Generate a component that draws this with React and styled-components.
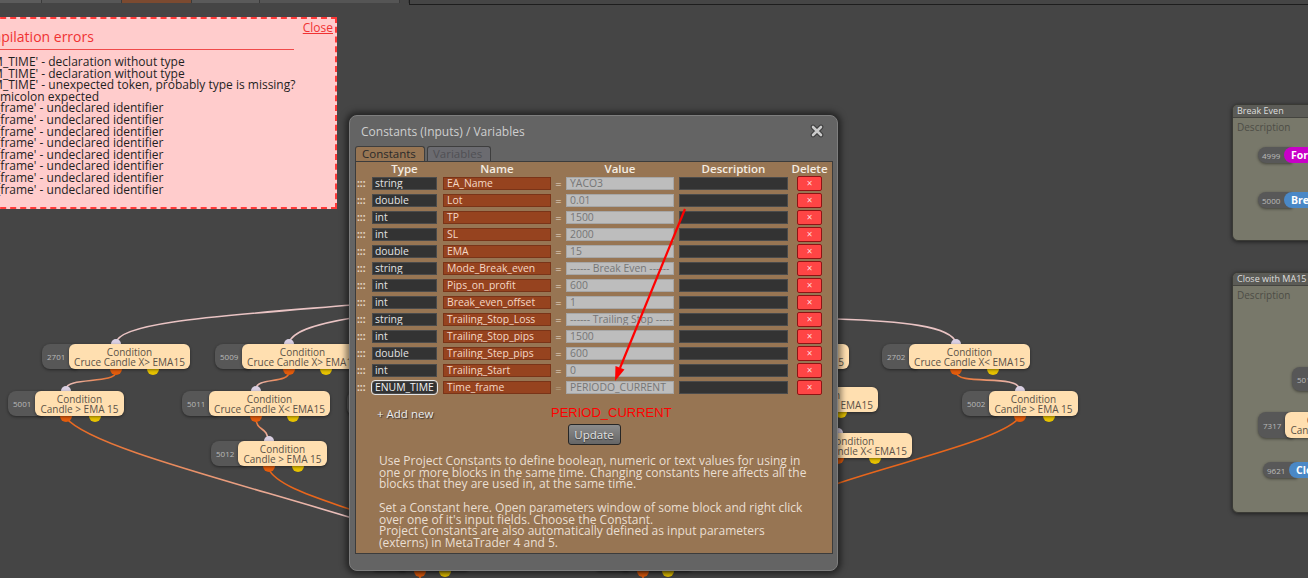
import React from 'react';
import styled, { createGlobalStyle } from 'styled-components';

const GlobalStyle = createGlobalStyle`
  html, body {
    margin: 0;
    padding: 0;
    background: #454545;
    overflow: hidden;
  }
  body {
    font-family: "Open Sans", "Noto Sans", sans-serif;
  }
`;

const Page = styled.div`
  position: relative;
  width: 1308px;
  height: 578px;
  overflow: hidden;
  background: #454545;
`;

/* thin strip of the docked toolbar that sticks in from the top */
const TopStrip = styled.div`
  display: flex;
  align-items: flex-start;
  height: 5px;
`;

const StripSeg = styled.div`
  width: ${p => p.$w}px;
  height: 3px;
  background: ${p => p.$c};
  border-right: 1px solid #3b3b3b;
  box-sizing: border-box;
`;

const DockEdge = styled.div`
  flex: 1;
  height: 5px;
  border-left: 1px solid #1d1d1d;
  border-bottom: 1px solid #1d1d1d;
  box-sizing: border-box;
`;

/* ---------- canvas: wires, nodes, groups ---------- */
const WireLayer = styled.svg`
  position: absolute;
  left: 0;
  top: 0;
  z-index: 1;
`;

const NodeWrap = styled.div`
  position: absolute;
  left: ${p => p.$x}px;
  top: ${p => p.$y}px;
  width: ${p => p.$w}px;
  height: ${p => p.$h || 25}px;
  display: flex;
  z-index: 2;
`;

const NodeId = styled.div`
  flex: 0 0 35px;
  margin-right: -8px;
  padding-left: 5px;
  box-sizing: border-box;
  background: #575757;
  border-radius: 8px 0 0 8px;
  color: #b9b9b9;
  font-size: 8px;
  display: flex;
  align-items: center;
  box-shadow: 0 1px 3px rgba(0, 0, 0, 0.45);
`;

const NodeBody = styled.div`
  position: relative;
  flex: 1;
  min-width: 0;
  background: #ffdfb0;
  border-radius: 6px;
  box-shadow: 0 1px 3px rgba(0, 0, 0, 0.45);
  color: #5c5247;
  font-size: 10px;
  line-height: 10px;
  text-align: center;
  display: flex;
  flex-direction: column;
  justify-content: center;
  white-space: nowrap;
  overflow: hidden;
`;

const Port = styled.span`
  position: absolute;
  z-index: -1;
  left: calc(${p => p.$at}% - ${p => p.$d / 2}px);
  width: ${p => p.$d}px;
  height: ${p => p.$d}px;
  border-radius: 50%;
  background: ${p => p.$c};
  ${p => (p.$top ? `top: -${p.$d / 2}px;` : `bottom: -${p.$d / 2}px;`)}
`;

function Node({ x, y, w, h, id, a = 'Condition', b }) {
  return (
    <NodeWrap $x={x} $y={y} $w={w} $h={h}>
      <Port $top $at={50} $d={10} $c="#d9cfe2" />
      <Port $at={50} $d={12} $c="#e35c0c" />
      <Port $at={75} $d={12} $c="#e6c200" />
      <NodeId>{id}</NodeId>
      <NodeBody>
        <span>{a}</span>
        <span>{b}</span>
      </NodeBody>
    </NodeWrap>
  );
}

const Group = styled.div`
  position: absolute;
  left: ${p => p.$x}px;
  top: ${p => p.$y}px;
  width: 220px;
  height: ${p => p.$h}px;
  box-sizing: border-box;
  background: #78786a;
  border: 1px solid #3a3a35;
  border-radius: 6px;
  box-shadow: 0 1px 4px rgba(0, 0, 0, 0.55);
  z-index: 2;
`;

const GroupTitle = styled.div`
  height: 12px;
  line-height: 12px;
  padding-left: 4px;
  background: #5b5b56;
  color: #dedede;
  font-size: 9px;
  border-radius: 5px 5px 0 0;
  border-bottom: 1px solid #44443f;
`;

const GroupDesc = styled.div`
  padding: 2px 0 0 4px;
  font-size: 10px;
  line-height: 14px;
  color: #4d4d46;
`;

const Pill = styled.div`
  position: absolute;
  left: ${p => p.$x}px;
  top: ${p => p.$y}px;
  height: 16px;
  display: flex;
`;

const PillId = styled.div`
  flex: 0 0 34px;
  margin-right: -8px;
  padding-left: 4px;
  box-sizing: border-box;
  background: #585858;
  border-radius: 8px 0 0 8px;
  color: #bcbcbc;
  font-size: 8px;
  display: flex;
  align-items: center;
  box-shadow: 0 1px 3px rgba(0, 0, 0, 0.45);
`;

const PillLabel = styled.div`
  position: relative;
  background: ${p => p.$c};
  color: #fff;
  font-size: 10.5px;
  font-weight: 700;
  line-height: 16px;
  padding: 0 7px;
  border-radius: 8px;
  white-space: nowrap;
`;

/* ---------- compilation errors popup ---------- */
const ErrorPanel = styled.div`
  position: absolute;
  left: -60px;
  top: 17px;
  width: 397px;
  height: 192px;
  box-sizing: border-box;
  background: #ffcccc;
  border: 2px dashed #ff3838;
  padding: 1px 2px 0 23px;
  z-index: 5;
`;

const ErrorHead = styled.div`
  display: flex;
  justify-content: space-between;
  align-items: flex-start;
`;

const ErrorTitle = styled.div`
  width: 329px;
  margin-top: 6.5px;
  padding: 0 0 3px 6px;
  box-sizing: border-box;
  border-bottom: 1px solid #f04a4a;
  color: #f03232;
  font-size: 14px;
  line-height: 19px;
`;

const CloseLink = styled.a`
  color: #f03232;
  font-size: 12px;
  line-height: 16px;
  text-decoration: underline;
`;

const ErrorList = styled.div`
  margin-top: 6.5px;
  color: #1f1f1f;
  font-size: 12px;
  line-height: 11.6px;
  white-space: nowrap;
`;

const ErrorLine = styled.div`
  margin-left: ${p => p.$shift || 0}px;
`;

/* ---------- constants dialog ---------- */
const Dialog = styled.div`
  position: absolute;
  left: 349px;
  top: 115px;
  width: 489px;
  height: 456px;
  box-sizing: border-box;
  background: #646464;
  border: 1px solid #7e7e7e;
  border-radius: 8px;
  box-shadow: 0 0 6px 3px rgba(0, 0, 0, 0.5);
  padding: 0 4px 0 5px;
  display: flex;
  flex-direction: column;
  z-index: 5;
`;

const TitleBar = styled.div`
  height: 30px;
  display: flex;
  align-items: center;
  justify-content: space-between;
  padding: 0 9px 0 6px;
  color: #cfcfcf;
  font-size: 12px;
`;

const Tabs = styled.div`
  height: 15px;
  display: flex;
  gap: 2px;
`;

const Tab = styled.div`
  width: ${p => p.$w}px;
  height: 15px;
  box-sizing: border-box;
  padding-left: ${p => (p.$active ? 6 : 5)}px;
  border: 1px solid #3e3e3e;
  border-bottom: none;
  border-radius: 3px 3px 0 0;
  background: ${p => (p.$active ? '#977553' : '#6b6b70')};
  color: ${p => (p.$active ? '#2a2a2a' : '#505054')};
  font-size: 11.5px;
  line-height: 14px;
`;

const Sheet = styled.div`
  height: 393px;
  box-sizing: border-box;
  background: #977553;
  border: 1px solid #3c3c3c;
  display: flex;
  flex-direction: column;
`;

const Row = styled.div`
  display: flex;
  align-items: center;
  height: ${p => p.$h || 17}px;
  padding-left: 1px;
`;

const Handle = styled.div`
  width: 10px;
  margin-right: 5px;
  color: #e6d9c8;
  font-size: 10px;
  font-weight: 700;
  line-height: 11px;
  white-space: nowrap;
  overflow: hidden;
`;

const Head = styled.div`
  width: ${p => p.$w}px;
  margin-left: ${p => p.$ml || 0}px;
  margin-right: ${p => p.$mr || 0}px;
  display: flex;
  justify-content: center;
  color: #f5ede2;
  font-size: 11.5px;
  font-weight: 600;
  line-height: 13px;
  white-space: nowrap;
`;

const Field = styled.div`
  width: ${p => p.$w}px;
  height: 13px;
  box-sizing: border-box;
  margin-left: ${p => p.$ml || 0}px;
  margin-right: ${p => p.$mr || 0}px;
  padding-left: ${p => p.$pl || 3}px;
  background: ${p => p.$bg};
  color: ${p => p.$fg};
  border: 1px solid ${p => p.$bd};
  font-size: 10.4px;
  line-height: 11px;
  white-space: nowrap;
  overflow: hidden;
  ${p => p.$focus && 'outline: 1px solid #e4e4e4; border-radius: 3px; color: #f4f4f4;'}
`;

const Eq = styled.div`
  width: 15px;
  text-align: center;
  color: ${p => (p.$dim ? '#bba58a' : '#e8dccc')};
  font-size: 11px;
  line-height: 13px;
`;

const DeleteBtn = styled.div`
  width: 25px;
  height: 15px;
  box-sizing: border-box;
  background: #ff4545;
  border: 1px solid #8e1414;
  border-radius: 2px;
  color: #ffdada;
  font-size: 10px;
  line-height: 12px;
  text-align: center;
`;

const AddRow = styled.div`
  display: grid;
  grid-template-columns: 195px 1fr;
  align-items: center;
  height: 18px;
  margin-top: 8px;
`;

const AddNew = styled.div`
  padding-left: 21px;
  color: #ededed;
  font-size: 11.5px;
  text-shadow: 1px 1px 1px #333;
`;

const Annotation = styled.div`
  color: #ff0000;
  font-family: "Liberation Sans", Arial, sans-serif;
  font-size: 13px;
  line-height: 16px;
`;

const UpdateButton = styled.div`
  align-self: center;
  width: 53px;
  height: 21px;
  margin-top: 2px;
  box-sizing: border-box;
  border: 1px solid #262626;
  border-radius: 3px;
  background: linear-gradient(#8c8c8c, #666);
  color: #e4e4e4;
  font-size: 11.5px;
  line-height: 19px;
  text-align: center;
  text-shadow: 0 1px 1px #333;
`;

const Help = styled.div`
  margin-top: 10px;
  padding-left: 23px;
  color: #eadfd2;
  font-size: 12px;
  line-height: 11.7px;
  white-space: nowrap;
`;

const ArrowLayer = styled.svg`
  position: absolute;
  left: 0;
  top: 0;
  z-index: 6;
  pointer-events: none;
`;

const errors = [
  ["'ENUM_TIME' - declaration without type", 0],
  ["'ENUM_TIME' - declaration without type", 0],
  ["'ENUM_TIME' - unexpected token, probably type is missing?", 0],
  ["';' - semicolon expected", 4],
  ...Array.from({ length: 8 }, () => ["'Time_frame' - undeclared identifier", 0]),
];

const constants = [
  ['string', 'EA_Name', 'YACO3'],
  ['double', 'Lot', '0.01'],
  ['int', 'TP', '1500'],
  ['int', 'SL', '2000'],
  ['double', 'EMA', '15'],
  ['string', 'Mode_Break_even', '------ Break Even ------'],
  ['int', 'Pips_on_profit', '600'],
  ['int', 'Break_even_offset', '1'],
  ['string', 'Trailing_Stop_Loss', '------ Trailing Stop ------'],
  ['int', 'Trailing_Stop_pips', '1500'],
  ['double', 'Trailing_Step_pips', '600'],
  ['int', 'Trailing_Start', '0'],
  ['ENUM_TIME', 'Time_frame', 'PERIODO_CURRENT'],
];

const nodes = [
  { id: '2701', x: 42, y: 344, w: 148, b: 'Cruce Candle X> EMA15' },
  { id: '5001', x: 8, y: 391, w: 116, b: 'Candle > EMA 15' },
  { id: '5009', x: 215, y: 344, w: 148, b: 'Cruce Candle X> EMA15' },
  { id: '5011', x: 182, y: 391, w: 148, b: 'Cruce Candle X< EMA15' },
  { id: '5012', x: 211, y: 441, w: 116, b: 'Candle > EMA 15' },
  { id: '5013', x: 347, y: 391, w: 148, b: 'Cruce Candle X< EMA15' },
  { id: '5005', x: 701, y: 344, w: 148, b: 'Cruce Candle X< EMA15' },
  { id: '5006', x: 730, y: 387, w: 148, b: 'Cruce Candle X> EMA15' },
  { id: '5014', x: 764, y: 433, w: 148, b: 'Cruce Candle X< EMA15' },
  { id: '2702', x: 882, y: 344, w: 148, b: 'Cruce Candle X< EMA15' },
  { id: '5002', x: 962, y: 391, w: 116, b: 'Candle > EMA 15' },
  { id: '5003', x: 370, y: 546, w: 100, b: 'Buy now' },
  { id: '5004', x: 593, y: 546, w: 100, b: 'Sell now' },
];

const PINK = '#eac4c4';
const ORANGE = '#e8661c';

const wires = [
  { d: 'M116 343 C 118 322, 220 316, 352 305', c: PINK },
  { d: 'M289 343 C 292 330, 322 323, 352 318', c: PINK },
  { d: 'M836 319 C 900 321, 952 326, 956 343', c: PINK },
  { d: 'M116 372 C 116 384, 66 377, 66 389', g: [116, 372, 66, 389] },
  { d: 'M289 372 C 289 384, 256 377, 256 389', g: [289, 372, 256, 389] },
  { d: 'M256 418 C 256 432, 268 426, 268 441', g: [256, 418, 268, 441] },
  { d: 'M956 372 C 956 386, 1019 374, 1019 389', g: [956, 372, 1019, 389] },
  { d: 'M66 418 C 90 446, 220 478, 352 518', g: [66, 418, 352, 518] },
  { d: 'M268 468 C 276 486, 318 498, 352 510', c: ORANGE },
  { d: 'M1019 418 C 1000 440, 900 462, 836 484', c: ORANGE },
  { d: 'M420 572 L 420 578', c: ORANGE },
  { d: 'M643 572 L 643 578', c: ORANGE },
];

export default function App() {
  return (
    <Page>
      <GlobalStyle />

      <TopStrip>
        <StripSeg $w={42} $c="#5c5c5c" />
        <StripSeg $w={80} $c="#575757" />
        <StripSeg $w={70} $c="#7b4a30" />
        <StripSeg $w={68} $c="#5a5a5a" />
        <StripSeg $w={140} $c="#555" />
        <StripSeg $w={9} $c="transparent" />
        <DockEdge />
      </TopStrip>

      <WireLayer width="1308" height="578">
        <defs>
          {wires.map((w, i) =>
            w.g ? (
              <linearGradient
                key={i}
                id={`wire${i}`}
                gradientUnits="userSpaceOnUse"
                x1={w.g[0]}
                y1={w.g[1]}
                x2={w.g[2]}
                y2={w.g[3]}
              >
                <stop offset="0" stopColor={ORANGE} />
                <stop offset="1" stopColor={PINK} />
              </linearGradient>
            ) : null
          )}
        </defs>
        {wires.map((w, i) => (
          <path
            key={i}
            d={w.d}
            fill="none"
            stroke={w.g ? `url(#wire${i})` : w.c}
            strokeWidth="1.6"
          />
        ))}
      </WireLayer>

      {nodes.map(n => (
        <Node key={n.id} {...n} />
      ))}

      <Group $x={1232} $y={104} $h={137}>
        <GroupTitle>Break Even</GroupTitle>
        <GroupDesc>Description</GroupDesc>
        <Pill $x={25} $y={42}>
          <PillId>4999</PillId>
          <PillLabel $c="#c800c8">For each Trade</PillLabel>
        </Pill>
        <Pill $x={25} $y={87}>
          <PillId>5000</PillId>
          <PillLabel $c="#4a88c6">Break even point</PillLabel>
        </Pill>
      </Group>

      <Group $x={1232} $y={272} $h={241}>
        <GroupTitle>Close with MA15</GroupTitle>
        <GroupDesc>Description</GroupDesc>
        <Node x={59} y={94} w={148} h={24} id="5010" b="Candle < EMA 15" />
        <Node x={25} y={139} w={116} h={26} id="7317" b="Candle < EMA 15" />
        <Pill $x={30} $y={189}>
          <PillId>9621</PillId>
          <PillLabel $c="#4a88c6">Close trades</PillLabel>
        </Pill>
      </Group>

      <ErrorPanel>
        <ErrorHead>
          <ErrorTitle>Compilation errors</ErrorTitle>
          <CloseLink>Close</CloseLink>
        </ErrorHead>
        <ErrorList>
          {errors.map(([text, shift], i) => (
            <ErrorLine key={i} $shift={shift}>
              {text}
            </ErrorLine>
          ))}
        </ErrorList>
      </ErrorPanel>

      <Dialog>
        <TitleBar>
          <span>Constants (Inputs) / Variables</span>
          <svg width="14" height="14" viewBox="0 0 14 14">
            <path d="M3 3 L11 11 M11 3 L3 11" stroke="#3b3b3b" strokeWidth="4.6" strokeLinecap="round" />
            <path d="M3 3 L11 11 M11 3 L3 11" stroke="#cacaca" strokeWidth="2.6" strokeLinecap="round" />
          </svg>
        </TitleBar>
        <Tabs>
          <Tab $w={70} $active>Constants</Tab>
          <Tab $w={64}>Variables</Tab>
        </Tabs>
        <Sheet>
          <Row $h={13}>
            <Head $w={10} $mr={5} />
            <Head $w={65} $mr={6}><span>Type</span></Head>
            <Head $w={108}><span>Name</span></Head>
            <Head $w={15} />
            <Head $w={108}><span>Value</span></Head>
            <Head $w={109} $ml={5} $mr={9}><span>Description</span></Head>
            <Head $w={25}><span>Delete</span></Head>
          </Row>
          {constants.map(([type, name, value]) => {
            const focus = type === 'ENUM_TIME';
            return (
              <Row key={name}>
                <Handle>:::</Handle>
                <Field $w={65} $mr={6} $pl={2} $bg="#333" $fg="#e2e2e2" $bd="#4b4b4b" $focus={focus}>
                  {type}
                </Field>
                <Field $w={108} $bg="#96431f" $fg="#f4d8c6" $bd="#7a3418">
                  {name}
                </Field>
                <Eq $dim={focus}>=</Eq>
                <Field $w={108} $bg="#bdbdbd" $fg="#767676" $bd="#a6a6a6">
                  {value}
                </Field>
                <Field $w={109} $ml={5} $mr={9} $bg="#333" $fg="#ddd" $bd="#4b4b4b" />
                <DeleteBtn>×</DeleteBtn>
              </Row>
            );
          })}
          <AddRow>
            <AddNew>+ Add new</AddNew>
            <Annotation>PERIOD_CURRENT</Annotation>
          </AddRow>
          <UpdateButton>Update</UpdateButton>
          <Help>
            Use Project Constants to define boolean, numeric or text values for using in
            <br />
            one or more blocks in the same time. Changing constants here affects all the
            <br />
            blocks that they are used in, at the same time.
            <br />
            <br />
            Set a Constant here. Open parameters window of some block and right click
            <br />
            over one of it's input fields. Choose the Constant.
            <br />
            Project Constants are also automatically defined as input parameters
            <br />
            (externs) in MetaTrader 4 and 5.
          </Help>
        </Sheet>
      </Dialog>

      <ArrowLayer width="1308" height="578">
        <line x1="685" y1="209" x2="620" y2="368" stroke="#ff0000" strokeWidth="2.2" />
        <polygon points="615,381 624.5,369.5 615.5,366" fill="#ff0000" />
      </ArrowLayer>
    </Page>
  );
}
